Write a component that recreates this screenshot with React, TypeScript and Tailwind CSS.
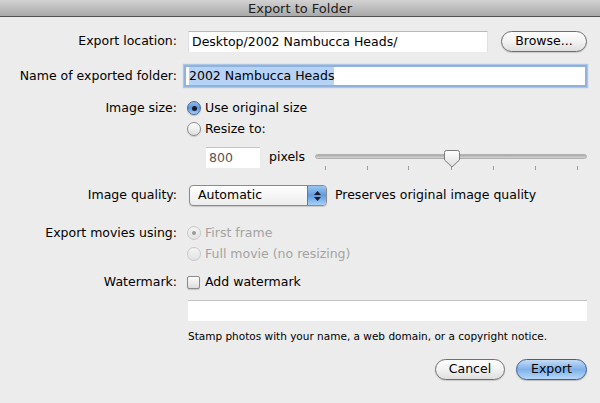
import React from 'react';

const font = { fontFamily: '"DejaVu Sans", "Liberation Sans", sans-serif' };

function Radio({ checked, disabled }: { checked?: boolean; disabled?: boolean }) {
  if (disabled) {
    return (
      <span className="w-[14px] h-[14px] rounded-full border border-[#c8c8c8] bg-gradient-to-b from-[#f4f4f4] to-[#e2e2e2] flex items-center justify-center shrink-0">
        {checked && <span className="w-[4px] h-[4px] rounded-full bg-[#9a9a9a]" />}
      </span>
    );
  }
  if (checked) {
    return (
      <span className="w-[14px] h-[14px] rounded-full border border-[#4a6a96] bg-gradient-to-b from-[#8fbcea] via-[#5a96dc] to-[#a6d0f6] flex items-center justify-center shrink-0 shadow-[0_1px_1px_rgba(0,0,0,0.2)]">
        <span className="w-[5px] h-[5px] rounded-full bg-[#1a1a2a]" />
      </span>
    );
  }
  return (
    <span className="w-[14px] h-[14px] rounded-full border border-[#8a8a8a] bg-gradient-to-b from-[#fdfdfd] via-[#f0f0f0] to-[#dcdcdc] shrink-0 shadow-[0_1px_1px_rgba(0,0,0,0.15)]" />
  );
}

function Label({ children }: { children: React.ReactNode }) {
  return <div className="w-[178px] text-right shrink-0 pr-[1px]">{children}</div>;
}

function Slider() {
  const ticks = [325, 367, 408, 451, 493, 535, 577];
  return (
    <div className="relative w-[272px] h-[22px]">
      <div className="absolute left-0 right-0 top-[4px] h-[5px] rounded-full bg-gradient-to-b from-[#a9a9a9] to-[#d6d6d6] border border-[#b0b0b0]" />
      {ticks.map((t) => (
        <div key={t} className="absolute top-[16px] w-px h-[4px] bg-[#9a9a9a]" style={{ left: t - 315 }} />
      ))}
      <svg className="absolute top-0" style={{ left: 129 }} width="16" height="18" viewBox="0 0 16 18">
        <defs>
          <linearGradient id="th" x1="0" y1="0" x2="0" y2="1">
            <stop offset="0" stopColor="#ffffff" />
            <stop offset="1" stopColor="#dcdcdc" />
          </linearGradient>
        </defs>
        <path d="M2.5 0.5 H13.5 a2 2 0 0 1 2 2 V10 L8 17 L0.5 10 V2.5 a2 2 0 0 1 2 -2 Z" fill="url(#th)" stroke="#7a7a7a" />
      </svg>
    </div>
  );
}

export default function App() {
  return (
    <div className="w-[600px] h-[403px] bg-[#ececec] text-[12.5px] text-black overflow-hidden" style={font}>
      <div className="h-[17px] bg-gradient-to-b from-[#d2d2d2] to-[#a9a9a9] border-b border-[#515151] flex items-center justify-center text-[13px] leading-none text-[#1c1c1c]">
        Export to Folder
      </div>

      <div className="pr-[13px]">
        <div className="flex items-center gap-[8px] mt-[14px] h-[21px]">
          <Label>Export location:</Label>
          <div className="w-[300px] h-[21px] ml-[2px] bg-white border-t border-[#b8b8b8] border-x border-x-[#e0e0e0] flex items-center px-[3px]">
            Desktop/2002 Nambucca Heads/
          </div>
          <button className="ml-auto w-[86px] h-[21px] rounded-full border border-[#6f6f6f] bg-gradient-to-b from-[#ffffff] via-[#f2f2f2] to-[#dedede] text-[12.5px] leading-none shadow-[0_1px_1px_rgba(0,0,0,0.15)]">
            Browse...
          </button>
        </div>

        <div className="flex items-center gap-[6px] mt-[13px] h-[22px]">
          <Label>Name of exported folder:</Label>
          <div className="flex-1 h-[22px] bg-white border-2 border-[#8fb2df] shadow-[0_0_1px_1px_rgba(110,160,220,0.5)] flex items-center px-[3px]">
            <span className="bg-[#b6d3f6]">2002 Nambucca Heads</span>
          </div>
        </div>

        <div className="flex items-center gap-[9px] mt-[11px] h-[20px]">
          <Label>Image size:</Label>
          <div className="flex items-center gap-[4px]">
            <Radio checked />
            <span>Use original size</span>
          </div>
        </div>
        <div className="flex items-center gap-[9px] mt-[1px] h-[20px]">
          <Label> </Label>
          <div className="flex items-center gap-[4px]">
            <Radio />
            <span>Resize to:</span>
          </div>
        </div>

        <div className="flex items-center mt-[8px] h-[21px]">
          <div className="w-[206px] shrink-0" />
          <div className="w-[54px] h-[21px] bg-white border-t border-[#c4c4c4] flex items-center px-[3px] text-[#555]">800</div>
          <span className="ml-[9px]">pixels</span>
          <div className="ml-auto mt-[6px]">
            <Slider />
          </div>
        </div>

        <div className="flex items-center gap-[11px] mt-[17px] h-[21px]">
          <Label>Image quality:</Label>
          <div className="w-[138px] h-[21px] rounded-[4px] border border-[#8a8a8a] bg-gradient-to-b from-[#ffffff] to-[#ececec] flex items-center overflow-hidden shadow-[0_1px_1px_rgba(0,0,0,0.15)]">
            <span className="flex-1 pl-[8px]">Automatic</span>
            <span className="w-[19px] h-full bg-gradient-to-b from-[#9ac4ef] via-[#5f9de0] to-[#a7d0f6] border-l border-[#5a7aa6] flex flex-col items-center justify-center gap-[2px]">
              <svg width="7" height="4" viewBox="0 0 7 4"><path d="M0 4 L3.5 0 L7 4 Z" fill="#1a1a2a" /></svg>
              <svg width="7" height="4" viewBox="0 0 7 4"><path d="M0 0 L3.5 4 L7 0 Z" fill="#1a1a2a" /></svg>
            </span>
          </div>
          <span className="ml-[-3px]">Preserves original image quality</span>
        </div>

        <div className="flex items-center gap-[9px] mt-[17px] h-[20px]">
          <Label>Export movies using:</Label>
          <div className="flex items-center gap-[4px] text-[#a3a3a3]">
            <Radio checked disabled />
            <span>First frame</span>
          </div>
        </div>
        <div className="flex items-center gap-[9px] mt-[1px] h-[20px]">
          <Label> </Label>
          <div className="flex items-center gap-[4px] text-[#a3a3a3]">
            <Radio disabled />
            <span>Full movie (no resizing)</span>
          </div>
        </div>

        <div className="flex items-center gap-[9px] mt-[8px] h-[20px]">
          <Label>Watermark:</Label>
          <div className="flex items-center gap-[5px]">
            <span className="w-[13px] h-[13px] rounded-[2px] border border-[#8a8a8a] bg-gradient-to-b from-[#fdfdfd] to-[#dcdcdc] shadow-[0_1px_1px_rgba(0,0,0,0.15)]" />
            <span>Add watermark</span>
          </div>
        </div>

        <div className="flex mt-[8px]">
          <div className="w-[188px] shrink-0" />
          <div className="flex-1 h-[21px] bg-white border-t border-[#c4c4c4]" />
        </div>

        <div className="flex mt-[9px] h-[14px] items-center">
          <div className="w-[188px] shrink-0" />
          <span className="text-[10.5px]">Stamp photos with your name, a web domain, or a copyright notice.</span>
        </div>

        <div className="flex justify-end gap-[11px] mt-[15px]">
          <button className="w-[70px] h-[21px] rounded-full border border-[#6f6f6f] bg-gradient-to-b from-[#ffffff] via-[#f2f2f2] to-[#dedede] text-[12.5px] leading-none shadow-[0_1px_1px_rgba(0,0,0,0.15)]">
            Cancel
          </button>
          <button className="w-[71px] h-[21px] rounded-full border border-[#3e5f8f] bg-gradient-to-b from-[#c3dcf6] via-[#7fb0ea] to-[#b6d8f8] text-[12.5px] leading-none shadow-[0_1px_1px_rgba(0,0,0,0.2)]">
            Export
          </button>
        </div>
      </div>
    </div>
  );
}
